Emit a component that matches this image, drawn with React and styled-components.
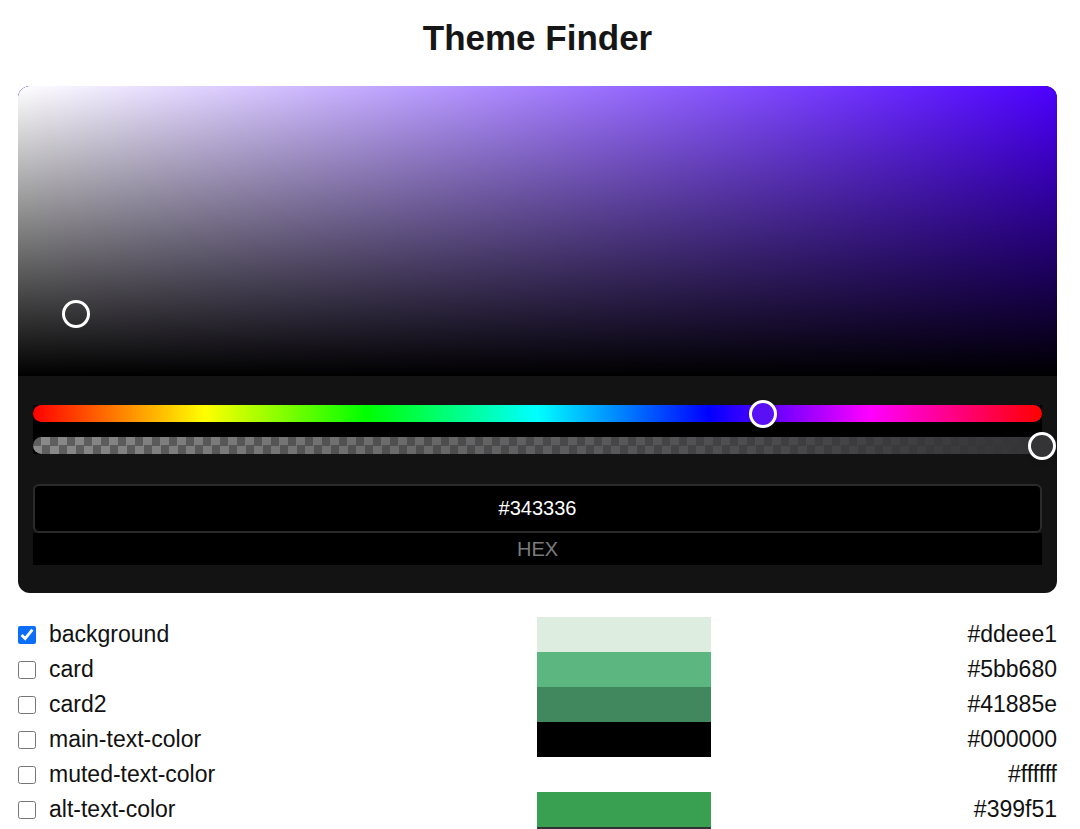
import { useState } from "react";
import styled, { createGlobalStyle } from "styled-components";

const colors = [
  { name: "background", hex: "#ddeee1" },
  { name: "card", hex: "#5bb680" },
  { name: "card2", hex: "#41885e" },
  { name: "main-text-color", hex: "#000000" },
  { name: "muted-text-color", hex: "#ffffff" },
  { name: "alt-text-color", hex: "#399f51" },
  { name: "border-color", hex: "#333333" },
];

const hue = 258;
const sat = { x: 5.6, y: 78.6 };

const App = () => {
  const [checked, setChecked] = useState("background");

  return (
    <Page>
      <GlobalStyle />
      <Title>Theme Finder</Title>
      <Card>
        <Saturation $hue={hue}>
          <Pointer style={{ left: `${sat.x}%`, top: `${sat.y}%` }} />
        </Saturation>
        <Controls>
          <Sliders>
            <HueTrack>
              <Thumb $fill="#5a10f5" style={{ left: "72.3%" }} />
            </HueTrack>
            <AlphaTrack>
              <Thumb $fill="#343336" $glow style={{ left: "100%" }} />
            </AlphaTrack>
          </Sliders>
          <HexBox>
            <HexInput defaultValue="#343336" />
          </HexBox>
          <HexLabel>HEX</HexLabel>
        </Controls>
      </Card>

      <ColorList>
        {colors.map((c) => (
          <Row key={c.name}>
            <NameCell>
              <Check
                type="checkbox"
                checked={checked === c.name}
                onChange={() => setChecked(c.name)}
              />
              <Name>{c.name}</Name>
            </NameCell>
            <Swatch $color={c.hex} />
            <HexText>{c.hex}</HexText>
          </Row>
        ))}
      </ColorList>
    </Page>
  );
};

const GlobalStyle = createGlobalStyle`
  body {
    margin: 0;
    background: #ffffff;
    font-family: "Liberation Sans", Arial, sans-serif;
    color: #111111;
  }
`;

const Page = styled.div`
  padding: 0 23px 0 18px;
`;

const Title = styled.h1`
  margin: 18px 0 28px;
  font-size: 35px;
  line-height: 40px;
  font-weight: bold;
  text-align: center;
  color: #161616;
`;

const Card = styled.div`
  background: #131313;
  border-radius: 12px;
  overflow: hidden;
`;

const Saturation = styled.div`
  position: relative;
  height: 290px;
  background: linear-gradient(to top, #000, rgba(0, 0, 0, 0)),
    linear-gradient(to right, #fff, rgba(255, 255, 255, 0)),
    hsl(${(p) => p.$hue}, 100%, 50%);
`;

const Pointer = styled.div`
  position: absolute;
  width: 28px;
  height: 28px;
  box-sizing: border-box;
  border: 3px solid #fff;
  border-radius: 50%;
  transform: translate(-50%, -50%);
`;

const Controls = styled.div`
  padding: 29px 15px 28px;
`;

const Sliders = styled.div`
  display: flex;
  flex-direction: column;
  gap: 15px;
  background: #000;
`;

const HueTrack = styled.div`
  position: relative;
  height: 17px;
  border-radius: 9px;
  background: linear-gradient(
    to right,
    #f00 0%,
    #ff0 17%,
    #0f0 33%,
    #0ff 50%,
    #00f 67%,
    #f0f 83%,
    #f00 100%
  );
`;

const AlphaTrack = styled.div`
  position: relative;
  height: 17px;
  border-radius: 9px;
  background: linear-gradient(to right, rgba(52, 51, 54, 0), rgb(52, 51, 54)),
    conic-gradient(#8a8a8a 25%, #5f5f5f 0 50%, #8a8a8a 0 75%, #5f5f5f 0) 0 0 /
      17px 17px;
`;

const Thumb = styled.div`
  position: absolute;
  top: 50%;
  width: 28px;
  height: 28px;
  box-sizing: border-box;
  border: 3px solid #fff;
  border-radius: 50%;
  background: ${(p) => p.$fill};
  transform: translate(-50%, -50%);
  box-shadow: ${(p) =>
    p.$glow ? "0 0 10px rgba(0, 0, 0, 0.08)" : "0 2px 4px rgba(0, 0, 0, 0.2)"};
`;

const HexBox = styled.div`
  margin-top: 30px;
  height: 49px;
  box-sizing: border-box;
  border: 2px solid #2b2b2b;
  border-radius: 6px;
  background: #000;
  display: flex;
`;

const HexInput = styled.input`
  flex: 1;
  border: none;
  outline: none;
  background: transparent;
  color: #fff;
  font-family: "Liberation Sans", Arial, sans-serif;
  font-size: 20px;
  text-align: center;
`;

const HexLabel = styled.div`
  height: 32px;
  line-height: 32px;
  background: #000;
  color: #7b7b7b;
  font-size: 20px;
  text-align: center;
`;

const ColorList = styled.div`
  margin-top: 24px;
`;

const Row = styled.div`
  display: grid;
  grid-template-columns: 519px 174px 1fr;
  align-items: center;
  height: 35px;
`;

const NameCell = styled.label`
  display: flex;
  align-items: center;
  gap: 13px;
`;

const Check = styled.input`
  width: 18px;
  height: 18px;
  margin: 0;
  accent-color: #0b6ef8;
`;

const Name = styled.span`
  font-size: 23px;
`;

const Swatch = styled.div`
  height: 100%;
  background: ${(p) => p.$color};
`;

const HexText = styled.span`
  font-size: 23px;
  text-align: right;
`;

export default App;
